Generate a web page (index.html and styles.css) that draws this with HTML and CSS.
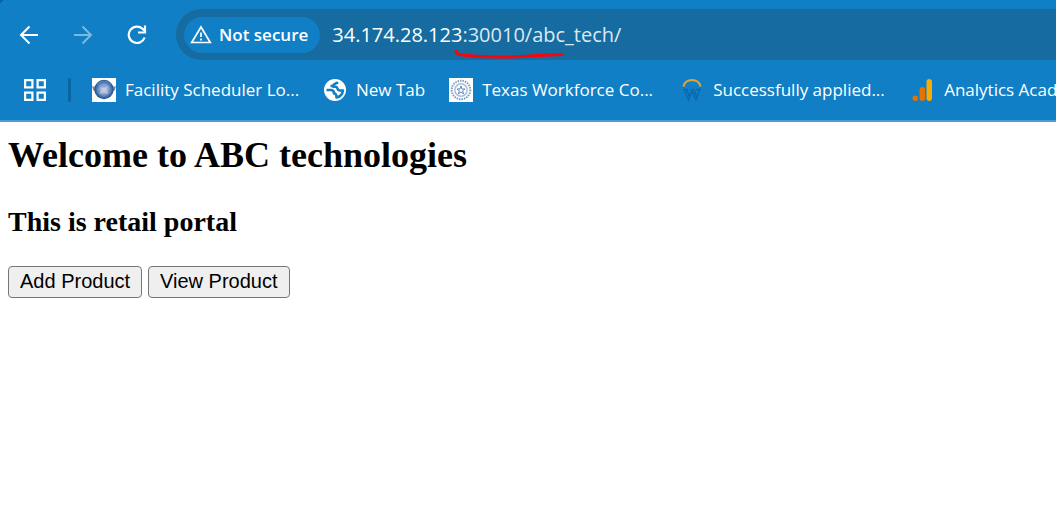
FILE: index.html
```html
<!DOCTYPE html>
<html lang="en">
<head>
<meta charset="utf-8">
<title>ABC technologies</title>
<link rel="stylesheet" href="styles.css">
</head>
<body>
<header class="chrome">
  <div class="toolbar">
    <nav class="controls" aria-label="Browser controls">
      <button class="icon-button" aria-label="Back">
        <svg width="20" height="20" viewBox="0 0 20 20" fill="none" stroke="currentColor" stroke-width="2"><path d="M19 10H2.500M10.500 1.500L2 10l8.500 8.500"/></svg>
      </button>
      <button class="icon-button faded" aria-label="Forward">
        <svg width="20" height="20" viewBox="0 0 20 20" fill="none" stroke="currentColor" stroke-width="2"><path d="M1 10h16.500M9.500 1.500L18 10l-8.500 8.500"/></svg>
      </button>
      <button class="icon-button" aria-label="Reload">
        <svg width="20" height="20" viewBox="0 0 20 20" fill="none" stroke="currentColor" stroke-width="2.200"><path d="M17.700 12.500A8.200 8.200 0 1 1 15.500 3.700L18 6.300"/><path d="M18 .5v7h-7"/></svg>
      </button>
    </nav>
    <div class="address">
      <button class="security">
        <svg width="22" height="19" viewBox="0 0 22 19" fill="none" stroke="currentColor" stroke-width="1.700"><path d="M11 2L20.300 17.500H1.700z"/><path d="M11 7.500v4.500M11 13.500v2"/></svg>
        <span>Not secure</span>
      </button>
      <div class="url"><span>34.174.28.123</span><span class="path">:30010/abc_tech/</span></div>
      <svg class="mark" width="112" height="12" viewBox="0 0 112 12" fill="none" stroke="#f5060c" stroke-width="3" stroke-linecap="round" stroke-linejoin="round"><path d="M2 2Q3 5 5 5.500Q20 8 45 8Q65 8 83 6.500Q98 6 108 5.500"/></svg>
    </div>
  </div>
  <nav class="bookmarks" aria-label="Bookmarks">
    <button class="icon-button apps" aria-label="Apps">
      <svg width="24" height="24" viewBox="0 0 24 24" fill="none" stroke="currentColor" stroke-width="2.200"><path d="M2.100 2.100h7.300v7.300H2.100zM14.600 2.100h7.300v7.300h-7.300zM2.100 14.600h7.300v7.300H2.100zM14.600 14.600h7.300v7.300h-7.300z"/></svg>
    </button>
    <span class="divider"></span>
    <a class="bookmark" href="#">
      <svg width="24" height="24" viewBox="0 0 24 24"><defs><radialGradient id="globe"><stop offset="0" stop-color="#b9c3df"/><stop offset=".55" stop-color="#7d97c8"/><stop offset=".85" stop-color="#2f66a8"/><stop offset="1" stop-color="#174a85"/></radialGradient></defs><path fill="#fff" d="M0 0h24v24H0z"/><path d="M0 8l4 1v5l-3-2zM24 8l-4 1v5l3-2z" fill="#8b919b"/><circle cx="12" cy="11.500" r="9.700" fill="url(#globe)"/><path d="M5 6.500Q12 0 19 6.500" stroke="#4f80b5" stroke-width="1.500" fill="none"/><path d="M8 9l4 1 4-2-1 4 1 4-4-1-4 1 1-4z" fill="#d2d8e9" opacity=".55"/></svg>
      <span class="label wide">Facility Scheduler Lo...</span>
    </a>
    <a class="bookmark" href="#">
      <svg width="24" height="24" viewBox="0 0 24 24"><circle cx="12" cy="12" r="11" fill="#fff"/><g fill="none" stroke="#107fc6" stroke-width="2.600" stroke-linejoin="round"><path d="M15 4.200C13 6 10.500 5 10 8H7.500"/><path d="M3.500 12H8q3 .2 3 3.500 2.500-.3 2.500 4Q19 18.500 20 12.500h-3q-2 0-2.500-2T12 8.800H9.500"/></g></svg>
      <span class="label">New Tab</span>
    </a>
    <a class="bookmark" href="#">
      <svg width="24" height="24" viewBox="0 0 24 24" fill="none"><path fill="#fff" d="M0 0h24v24H0z"/><g stroke="#527eb4"><circle cx="12" cy="12" r="9.300" stroke-width="2" stroke-dasharray="1.500 1" opacity=".75"/><circle cx="12" cy="12" r="6.200" stroke-width="1.500" opacity=".5"/><path d="M12 8l1 3h3l-2.400 1.800 1 3L12 14l-2.600 1.800 1-3L8 11h3z" stroke-width=".9"/></g></svg>
      <span class="label wide">Texas Workforce Co...</span>
    </a>
    <a class="bookmark" href="#">
      <svg width="24" height="24" viewBox="0 0 24 24" fill="none"><path d="M3.500 8.500C5 0 19 0 20.500 8.500" stroke="#e7a338" stroke-width="2.200"/><path d="M3 11.500h5M10 11.500h4M16 11.500h5M4.500 12l4 10 3.500-9 4 9 3.500-10M7 12l3 8M14 12l3 8" stroke="#07599b" stroke-width="1.300" opacity=".6"/></svg>
      <span class="label wide">Successfully applied...</span>
    </a>
    <a class="bookmark" href="#">
      <svg width="24" height="24" viewBox="0 0 24 24"><rect x="15.500" y="1" width="5.500" height="22" rx="2.750" fill="#f9ab00"/><rect x="8.500" y="9" width="5.500" height="14" rx="2.750" fill="#e37400"/><circle cx="4.250" cy="20.300" r="2.700" fill="#e37400"/></svg>
      <span class="label">Analytics Academy</span>
    </a>
  </nav>
</header>
<main class="page">
  <h2 class="title">Welcome to ABC technologies</h2>
  <h3 class="subtitle">This is retail portal</h3>
  <div class="actions">
    <button class="action">Add Product</button>
    <button class="action">View Product</button>
  </div>
</main>
</body>
</html>
```
FILE: styles.css
```css
* { box-sizing: border-box; }
body { margin: 0; background: #fff; color: #000; font-family: "Liberation Serif", serif; }
button { font: inherit; color: inherit; }
svg { display: block; flex: none; }
.chrome {
  overflow: hidden;
  background: radial-gradient(circle at 12px 12px, #107fc6 14px, #07649e 15px) 0 0 / 12px 12px no-repeat #107fc6;
  border-bottom: 2px solid #4b9dd3;
  color: #fff;
  font-family: "Open Sans", "Noto Sans", sans-serif;
}
.toolbar { display: flex; align-items: center; gap: 29px; padding: 9px 0 0 19px; }
.controls { display: flex; gap: 34px; }
.icon-button { padding: 0; border: 0; background: none; }
.faded { opacity: .45; }
.address {
  position: relative;
  display: flex;
  flex: 1;
  align-items: center;
  gap: 12px;
  height: 51px;
  padding-left: 8px;
  border-radius: 26px 0 0 26px;
  background: #166ba0;
}
.security {
  display: flex;
  align-items: center;
  gap: 7px;
  height: 36px;
  padding: 0 12px 0 6px;
  border: 0;
  border-radius: 18px;
  background: #107fc6;
  font-size: 17px;
  font-weight: 600;
  white-space: nowrap;
}
.url { font-size: 20px; white-space: nowrap; }
.path { color: #dce9f1; }
.mark { position: absolute; left: 278px; top: 40px; }
.bookmarks { display: flex; align-items: center; height: 60px; padding-left: 23px; white-space: nowrap; }
.divider { flex: none; width: 3px; height: 24px; margin: 0 21px; border-radius: 2px; background: #0a65a5; }
.bookmark { display: flex; flex: none; align-items: center; gap: 9px; margin-right: 24px; color: #fff; font-size: 17px; text-decoration: none; }
.label { padding-bottom: 2px; }
.wide { width: 174px; }
.page { padding: 12px 8px; }
.title { margin: 0; font-size: 36px; line-height: 42px; }
.subtitle { margin: 30px 0 28px; font-size: 28px; line-height: 32px; }
.actions { display: flex; gap: 6px; }
.action {
  height: 32px;
  padding: 0 11px 2px;
  border: 1px solid #767676;
  border-radius: 4px;
  background: #efefef;
  font-family: "Liberation Sans", Arial, sans-serif;
  font-size: 20px;
  line-height: 28px;
}
```
